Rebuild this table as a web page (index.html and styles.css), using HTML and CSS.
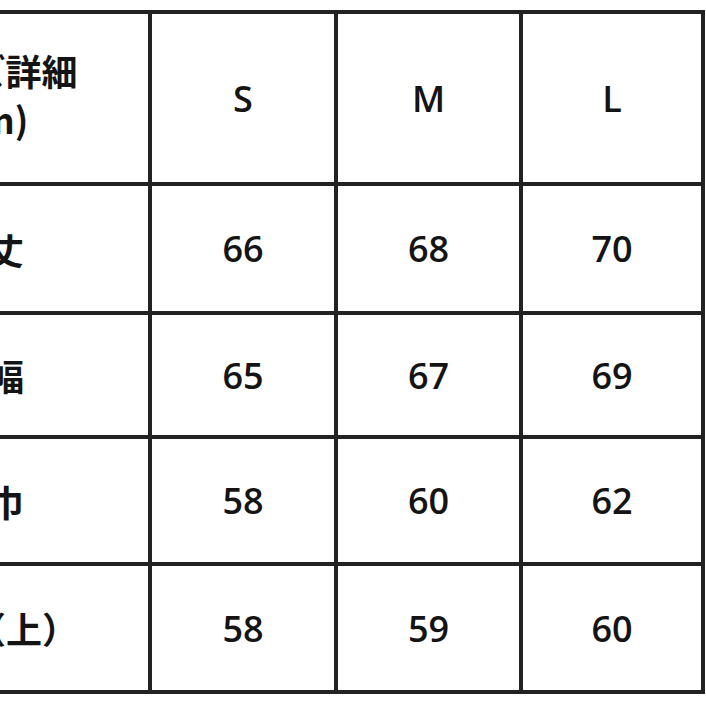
FILE: index.html
```html
<!DOCTYPE html>
<html lang="ja">
<head>
<meta charset="utf-8">
<title>サイズ詳細</title>
<link rel="stylesheet" href="styles.css">
</head>
<body>
<div class="sheet">
  <div class="cell label head">サイズ詳細<br>(cm)</div>
  <div class="cell num">S</div>
  <div class="cell num">M</div>
  <div class="cell num">L</div>

  <div class="cell label">着丈</div>
  <div class="cell num">66</div>
  <div class="cell num">68</div>
  <div class="cell num">70</div>

  <div class="cell label">身幅</div>
  <div class="cell num">65</div>
  <div class="cell num">67</div>
  <div class="cell num">69</div>

  <div class="cell label">肩巾</div>
  <div class="cell num">58</div>
  <div class="cell num">60</div>
  <div class="cell num">62</div>

  <div class="cell label">袖丈（上）</div>
  <div class="cell num">58</div>
  <div class="cell num">59</div>
  <div class="cell num">60</div>
</div>
</body>
</html>
```

FILE: styles.css
```css
html, body {
  margin: 0;
  padding: 0;
  background: #ffffff;
  overflow: hidden;
}

.sheet {
  display: grid;
  grid-template-columns: 320px 182px 181px 178px;
  grid-template-rows: 168px 125px 120px 123px 124px;
  gap: 4px;
  padding: 4px;
  margin: 10px 0 0 -176px;
  width: max-content;
  background: #222222;
}

.cell {
  background: #ffffff;
  display: flex;
  align-items: center;
  justify-content: center;
  text-align: center;
  color: #141414;
}

.num {
  font-family: "Open Sans", "Liberation Sans", sans-serif;
  font-weight: 600;
  font-size: 36px;
}

.label {
  font-family: "Noto Sans CJK JP", "Noto Sans", sans-serif;
  font-weight: 700;
  font-size: 36px;
}

.head {
  line-height: 48px;
  padding-bottom: 8px;
  box-sizing: border-box;
}
```
